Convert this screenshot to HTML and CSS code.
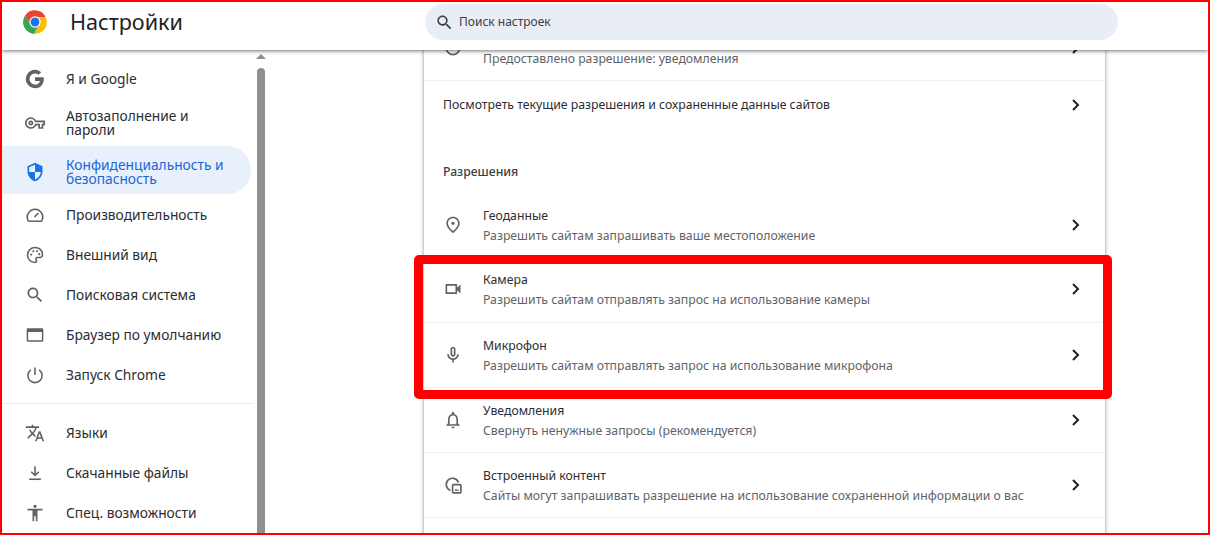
FILE: index.html
```html
<!DOCTYPE html>
<html lang="ru">
  <head>
    <meta charset="utf-8" />
    <meta name="viewport" content="width=device-width,initial-scale=1.0" />
    <title>Настройки</title>
    <link rel="stylesheet" href="styles.css">
  </head>
  <body>
    <div class="frame">
      <header class="topbar">
        <div class="brand">
          <svg class="chrome-logo" viewBox="0 0 24 24">
            <path fill="#ea4335" d="M12 7.5h9.9A11 11 0 0 0 2.8 6l4.9 8.5z"/>
            <path fill="#fbbc04" d="M21.9 7.5H12l3.9 6.75L11 23A11 11 0 0 0 21.9 7.5z"/>
            <path fill="#34a853" d="M2.8 6A11 11 0 0 0 11 23l4.9-8.75H8.1z"/>
            <circle cx="12" cy="12" r="5.2" fill="#fff"/>
            <circle cx="12" cy="12" r="4.1" fill="#1a73e8"/>
          </svg>
          <h1 class="page-title">Настройки</h1>
        </div>
        <div class="search">
          <svg class="search-icon" viewBox="0 0 24 24"><path d="M15.5 14h-.79l-.28-.27C15.41 12.59 16 11.11 16 9.5 16 5.91 13.09 3 9.5 3S3 5.91 3 9.5 5.91 16 9.5 16c1.61 0 3.09-.59 4.23-1.57l.27.28v.79l5 4.99L20.49 19l-4.99-5zm-6 0C7.01 14 5 11.99 5 9.5S7.01 5 9.5 5 14 7.01 14 9.5 11.99 14 9.5 14z"/></svg>
          <span class="search-text">Поиск настроек</span>
        </div>
      </header>

      <div class="layout">
        <aside class="sidebar">
          <nav class="nav">
            <a class="nav-item">
              <svg class="nav-icon" viewBox="0 0 24 24"><path d="M22.56 12.25c0-.78-.07-1.53-.2-2.25H12v4.26h5.92c-.26 1.37-1.04 2.53-2.21 3.31v2.77h3.57c2.08-1.92 3.28-4.74 3.28-8.09z"/><path d="M12 23c2.97 0 5.46-.98 7.28-2.66l-3.57-2.77c-.98.66-2.23 1.06-3.71 1.06-2.86 0-5.29-1.93-6.16-4.53H2.18v2.84C3.99 20.53 7.7 23 12 23z"/><path d="M5.84 14.09c-.22-.66-.35-1.36-.35-2.09s.13-1.43.35-2.09V7.07H2.18C1.43 8.55 1 10.22 1 12s.43 3.45 1.18 4.93l2.85-2.22.81-.62z"/><path d="M12 5.38c1.62 0 3.06.56 4.21 1.64l3.15-3.15C17.45 2.09 14.97 1 12 1 7.7 1 3.99 3.47 2.18 7.07l3.66 2.84c.87-2.6 3.3-4.53 6.16-4.53z"/></svg>
              <span>Я и Google</span>
            </a>
            <a class="nav-item tall">
              <svg class="nav-icon" viewBox="0 0 24 24"><path d="M22 19h-6v-4h-2.68c-1.14 2.42-3.6 4-6.32 4-3.86 0-7-3.14-7-7s3.14-7 7-7c2.72 0 5.17 1.58 6.32 4H24v6h-2v4zm-4-2h2v-4h2v-2H11.94l-.23-.67C11.01 8.34 9.11 7 7 7c-2.76 0-5 2.24-5 5s2.24 5 5 5c2.11 0 4.01-1.34 4.71-3.33l.23-.67H18v4zM7 15c-1.65 0-3-1.35-3-3s1.35-3 3-3 3 1.35 3 3-1.35 3-3 3zm0-4c-.55 0-1 .45-1 1s.45 1 1 1 1-.45 1-1-.45-1-1-1z"/></svg>
              <span>Автозаполнение и<br>пароли</span>
            </a>
            <a class="nav-item tall active">
              <svg class="nav-icon" viewBox="0 0 24 24"><path d="M12 1L3 5v6c0 5.55 3.84 10.74 9 12 5.16-1.26 9-6.45 9-12V5l-9-4zm0 10.99h7c-.53 4.12-3.28 7.79-7 8.94V12H5V6.3l7-3.11v8.8z"/></svg>
              <span>Конфиденциальность и<br>безопасность</span>
            </a>
            <a class="nav-item">
              <svg class="nav-icon line" viewBox="0 0 24 24"><path d="M5 19.5h14a1.5 1.5 0 0 0 1.3-.9A9.5 9.5 0 0 0 12 5a9.5 9.5 0 0 0-8.3 13.6 1.5 1.5 0 0 0 1.3.9z"/><path d="M11.5 14.5l4.5-5"/></svg>
              <span>Производительность</span>
            </a>
            <a class="nav-item">
              <svg class="nav-icon line" viewBox="0 0 24 24"><path d="M12 3c-5 0-9 4-9 9s4 9 9 9c1.400 0 2-1 2-1.800 0-1.200-1-1.500-1-2.500s.8-1.700 1.800-1.700H17c2.500 0 4-1.700 4-4 0-4.400-4-8-9-8z"/><circle class="dot" cx="7.500" cy="11.500" r="1.300"/><circle class="dot" cx="10" cy="7.500" r="1.300"/><circle class="dot" cx="14.500" cy="7.500" r="1.300"/><circle class="dot" cx="17" cy="11" r="1.300"/></svg>
              <span>Внешний вид</span>
            </a>
            <a class="nav-item">
              <svg class="nav-icon" viewBox="0 0 24 24"><path d="M15.500 14h-.79l-.28-.27C15.410 12.590 16 11.110 16 9.500 16 5.910 13.090 3 9.500 3S3 5.910 3 9.500 5.910 16 9.500 16c1.610 0 3.090-.59 4.230-1.570l.27.28v.79l5 4.990L20.490 19l-4.990-5zm-6 0C7.010 14 5 11.990 5 9.500S7.010 5 9.500 5 14 7.010 14 9.500 11.990 14 9.500 14z"/></svg>
              <span>Поисковая система</span>
            </a>
            <a class="nav-item">
              <svg class="nav-icon" viewBox="0 0 24 24"><path fill-rule="evenodd" d="M3.500 4h17A1.500 1.500 0 0 1 22 5.500v13a1.500 1.500 0 0 1-1.500 1.500h-17A1.500 1.500 0 0 1 2 18.500v-13A1.500 1.500 0 0 1 3.500 4zM3.800 8.500v9.700h16.400V8.500z"/></svg>
              <span>Браузер по умолчанию</span>
            </a>
            <a class="nav-item">
              <svg class="nav-icon line" viewBox="0 0 24 24"><path d="M12 3v9"/><path d="M7 5.800a8.500 8.500 0 1 0 10 0"/></svg>
              <span>Запуск Chrome</span>
            </a>
            <hr class="nav-divider">
            <a class="nav-item">
              <svg class="nav-icon" viewBox="0 0 24 24"><path d="M12.870 15.070l-2.540-2.510.03-.03c1.740-1.940 2.980-4.170 3.710-6.530H17V4h-7V2H8v2H1v1.990h11.170C11.500 7.920 10.440 9.750 9 11.350 8.070 10.320 7.300 9.190 6.690 8h-2c.73 1.630 1.730 3.170 2.980 4.560l-5.090 5.020L4 19l5-5 3.110 3.110.76-2.040zM18.500 10h-2L12 22h2l1.120-3h4.750L21 22h2l-4.500-12zm-2.620 7l1.620-4.330L19.120 17h-3.240z"/></svg>
              <span>Языки</span>
            </a>
            <a class="nav-item">
              <svg class="nav-icon line" viewBox="0 0 24 24"><path d="M12 4v11"/><path d="M7.500 10.500L12 15l4.500-4.500"/><path d="M5 19.500h14"/></svg>
              <span>Скачанные файлы</span>
            </a>
            <a class="nav-item">
              <svg class="nav-icon" viewBox="0 0 24 24"><path d="M12 2c1.100 0 2 .9 2 2s-.9 2-2 2-2-.9-2-2 .9-2 2-2zm9 7h-6v13h-2v-6h-2v6H9V9H3V7h18v2z"/></svg>
              <span>Спец. возможности</span>
            </a>
          </nav>
          <div class="scrollbar">
            <span class="scroll-arrow"></span>
            <span class="scroll-thumb"></span>
          </div>
        </aside>

        <main class="main">
          <section class="card">
            <div class="row">
              <svg class="row-icon" viewBox="0 0 24 24"><circle class="stroke" cx="12" cy="12" r="8"/></svg>
              <div class="row-text">
                <div class="row-title"></div>
                <div class="row-sub">Предоставлено разрешение: уведомления</div>
              </div>
              <svg class="chevron" viewBox="0 0 10 14"><path d="M2 2l5 5-5 5"/></svg>
            </div>
            <div class="row short">
              <div class="row-text">
                <div class="row-title">Посмотреть текущие разрешения и сохраненные данные сайтов</div>
              </div>
              <svg class="chevron" viewBox="0 0 10 14"><path d="M2 2l5 5-5 5"/></svg>
            </div>
            <h2 class="section-title">Разрешения</h2>
            <div class="row no-border">
              <svg class="row-icon" viewBox="0 0 24 24"><path d="M12 12c-1.100 0-2-.9-2-2s.9-2 2-2 2 .9 2 2-.9 2-2 2zm6-1.800C18 6.570 15.350 4 12 4s-6 2.570-6 6.200c0 2.340 1.950 5.440 6 9.140 4.050-3.700 6-6.800 6-9.140zM12 2c4.200 0 8 3.220 8 8.200 0 3.320-2.670 7.250-8 11.800-5.330-4.550-8-8.480-8-11.800C4 5.220 7.800 2 12 2z"/></svg>
              <div class="row-text">
                <div class="row-title">Геоданные</div>
                <div class="row-sub">Разрешить сайтам запрашивать ваше местоположение</div>
              </div>
              <svg class="chevron" viewBox="0 0 10 14"><path d="M2 2l5 5-5 5"/></svg>
            </div>
            <div class="row">
              <svg class="row-icon" viewBox="0 0 24 24"><path d="M15 8v8H5V8h10m1-2H4c-.55 0-1 .45-1 1v10c0 .55.45 1 1 1h12c.55 0 1-.45 1-1v-3.500l4 4v-11l-4 4V7c0-.55-.45-1-1-1z"/></svg>
              <div class="row-text">
                <div class="row-title">Камера</div>
                <div class="row-sub">Разрешить сайтам отправлять запрос на использование камеры</div>
              </div>
              <svg class="chevron" viewBox="0 0 10 14"><path d="M2 2l5 5-5 5"/></svg>
            </div>
            <div class="row">
              <svg class="row-icon" viewBox="0 0 24 24"><path d="M12 14c1.660 0 3-1.340 3-3V5c0-1.660-1.340-3-3-3S9 3.340 9 5v6c0 1.660 1.340 3 3 3zm-1-9c0-.55.45-1 1-1s1 .45 1 1v6c0 .55-.45 1-1 1s-1-.45-1-1V5zm6 6c0 2.760-2.240 5-5 5s-5-2.240-5-5H5c0 3.530 2.610 6.430 6 6.920V21h2v-3.080c3.390-.49 6-3.390 6-6.920h-2z"/></svg>
              <div class="row-text">
                <div class="row-title">Микрофон</div>
                <div class="row-sub">Разрешить сайтам отправлять запрос на использование микрофона</div>
              </div>
              <svg class="chevron" viewBox="0 0 10 14"><path d="M2 2l5 5-5 5"/></svg>
            </div>
            <div class="row">
              <svg class="row-icon" viewBox="0 0 24 24"><path d="M12 22c1.100 0 2-.9 2-2h-4c0 1.100.9 2 2 2zm6-6v-5c0-3.070-1.630-5.640-4.500-6.320V4c0-.83-.67-1.500-1.500-1.500s-1.500.67-1.500 1.500v.68C7.640 5.360 6 7.920 6 11v5l-2 2v1h16v-1l-2-2zm-2 1H8v-6c0-2.480 1.510-4.500 4-4.500s4 2.020 4 4.500v6z"/></svg>
              <div class="row-text">
                <div class="row-title">Уведомления</div>
                <div class="row-sub">Свернуть ненужные запросы (рекомендуется)</div>
              </div>
              <svg class="chevron" viewBox="0 0 10 14"><path d="M2 2l5 5-5 5"/></svg>
            </div>
            <div class="row">
              <svg class="row-icon" viewBox="0 0 24 24"><path class="stroke" d="M9 18.500A7.500 7.500 0 1 1 18.500 9"/><path class="stroke" d="M12.500 11.500h8a1 1 0 0 1 1 1v8a1 1 0 0 1-1 1h-8a1 1 0 0 1-1-1v-8a1 1 0 0 1 1-1z"/><path d="M13.500 19l2-2.500 1.500 1.500 1-1 1.500 2z"/></svg>
              <div class="row-text">
                <div class="row-title">Встроенный контент</div>
                <div class="row-sub">Сайты могут запрашивать разрешение на использование сохраненной информации о вас</div>
              </div>
              <svg class="chevron" viewBox="0 0 10 14"><path d="M2 2l5 5-5 5"/></svg>
            </div>
            <div class="row no-border"></div>
          </section>
        </main>
      </div>

      <div class="highlight"></div>
    </div>
  </body>
</html>
```

FILE: styles.css
```css
* {
  box-sizing: border-box;
}
html,
body {
  margin: 0;
  height: 100%;
  background: #fff;
}
body {
  font-family: "Noto Sans", "Open Sans", sans-serif;
  color: #2b2d30;
  overflow: hidden;
}

.frame {
  position: relative;
  height: 535px;
  border: 2px solid #f00;
  overflow: hidden;
  display: flex;
  flex-direction: column;
}

/* header */
.topbar {
  position: relative;
  z-index: 2;
  flex: none;
  height: 48px;
  display: flex;
  align-items: flex-start;
  background: #fff;
  box-shadow: 0 1px 4px rgba(0, 0, 0, 0.55);
}
.brand {
  width: 423px;
  height: 39px;
  display: flex;
  align-items: center;
  padding-left: 20px;
}
.chrome-logo {
  width: 26px;
  height: 26px;
}
.page-title {
  margin: 0 0 0 22px;
  font-size: 21.6px;
  font-weight: 400;
  color: #1f2124;
}
.search {
  margin-top: 2px;
  width: 693px;
  height: 36px;
  display: flex;
  align-items: center;
  padding-left: 10px;
  background: #e9edf6;
  border-radius: 18px;
}
.search-icon {
  width: 19px;
  height: 19px;
  fill: #3c4043;
}
.search-text {
  margin-left: 5px;
  margin-top: -1px;
  font-size: 12px;
  color: #3c4043;
}

.layout {
  flex: 1;
  min-height: 0;
  display: flex;
}

/* sidebar */
.sidebar {
  flex: none;
  width: 263px;
  display: flex;
  padding-top: 9px;
}
.nav {
  width: 249px;
}
.nav-item {
  height: 40px;
  display: flex;
  align-items: center;
  padding-left: 23px;
  font-size: 13.75px;
  line-height: 14px;
  color: #2b2d30;
}
.nav-item.tall {
  height: 48px;
}
.nav-item.active {
  margin: -1px 0 1px;
  padding-top: 4px;
  color: #1a66d6;
  background: #e8f0fb;
  border-radius: 0 24px 24px 0;
}
.nav-icon {
  flex: none;
  width: 20px;
  height: 20px;
  margin-right: 21px;
  fill: #5f6368;
}
.active .nav-icon {
  fill: #1a73e8;
}
.nav-icon.line {
  fill: none;
  stroke: #5f6368;
  stroke-width: 1.9;
}
.line .dot {
  fill: #5f6368;
  stroke: none;
}
.nav-divider {
  margin: 8px 0 9px;
  border: 0;
  border-top: 1px solid #eceded;
  width: 252px;
}
.scrollbar {
  width: 8px;
  margin-left: 6px;
  margin-top: -5px;
  display: flex;
  flex-direction: column;
  align-items: center;
}
.scroll-arrow {
  width: 0;
  height: 0;
  margin-bottom: 9px;
  border-left: 5px solid transparent;
  border-right: 5px solid transparent;
  border-bottom: 5px solid #8f8f8f;
}
.scroll-thumb {
  flex: 1;
  width: 8px;
  background: #8f8f8f;
  border-radius: 4px 4px 0 0;
}

/* main card */
.main {
  flex: 1;
  min-width: 0;
  overflow: hidden;
  padding-left: 159px;
}
.card {
  width: 681px;
  margin-top: -34px;
  background: #fff;
  box-shadow: 0 0 4px rgba(0, 0, 0, 0.45);
}
.row {
  height: 65.2px;
  display: flex;
  align-items: center;
  padding: 0 24px 0 19px;
  border-bottom: 1px solid #f0f0f0;
}
.row.short {
  height: 48px;
  border-bottom: 0;
}
.row.no-border {
  border-bottom: 0;
}
.row-icon {
  flex: none;
  width: 20px;
  height: 20px;
  margin-right: 20px;
  fill: #5f6368;
}
.row-icon .stroke {
  fill: none;
  stroke: #5f6368;
  stroke-width: 2;
}
.row-text {
  flex: 1;
  min-width: 0;
  padding-top: 2px;
}
.short .row-text {
  padding-top: 0;
}
.row-title {
  min-height: 20px;
  font-size: 12.25px;
  line-height: 20px;
  color: #2b2d30;
}
.row-sub {
  font-size: 12.25px;
  line-height: 20px;
  color: #5f6368;
}
.chevron {
  flex: none;
  width: 10px;
  height: 14px;
  fill: none;
  stroke: #202124;
  stroke-width: 2;
}
.section-title {
  margin: 0;
  height: 63px;
  padding: 33px 0 0 19px;
  font-size: 12.25px;
  line-height: 20px;
  font-weight: 500;
  color: #3c4043;
}

/* red annotation drawn over the screenshot */
.highlight {
  position: absolute;
  z-index: 3;
  left: 412px;
  top: 253px;
  width: 698px;
  height: 144px;
  border: 9px solid #f00;
  border-radius: 5px;
  pointer-events: none;
}
```
